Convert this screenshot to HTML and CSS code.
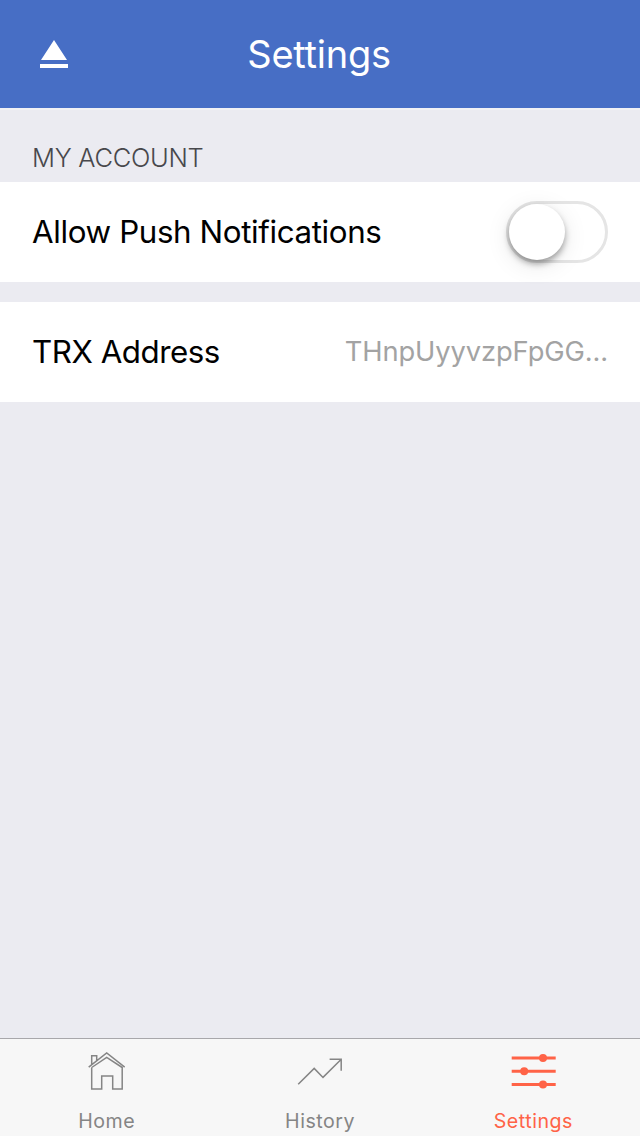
FILE: index.html
```html
<!DOCTYPE html>
<html lang="en">
<head>
<meta charset="utf-8">
<title>Settings</title>
<link rel="stylesheet" href="styles.css">
</head>
<body>
<div class="app">
  <header class="navbar">
    <button class="nav-button" aria-label="Eject">
      <svg width="28" height="28" viewBox="0 0 28 28" fill="currentColor"><path d="M14 0L27 20H1zM0 24h28v4H0z"/></svg>
    </button>
    <h1 class="title"><span>Settings</span></h1>
  </header>
  <main class="content">
    <h2 class="section-title"><span>MY ACCOUNT</span></h2>
    <div class="row">
      <span class="label label-push">Allow Push Notifications</span>
      <div class="switch" role="switch" aria-checked="false"><div class="knob"></div></div>
    </div>
    <div class="row">
      <span class="label label-address">TRX Address</span>
      <span class="value">THnpUyyvzpFpGG...</span>
    </div>
  </main>
  <nav class="tabbar">
    <a class="tab">
      <svg class="tab-icon" width="50" height="50" viewBox="0 0 50 50" fill="none" stroke="currentColor" stroke-width="1.5"><path d="M6.7 21.2L24.7 7L42.7 21.2M9.7 18.7V9.7H14.7V14.8M9.7 21.5V43H19.7V30H30.7V43H40.2V21.5L24.7 11.3L9.7 21.5"/></svg>
      <span class="tab-label">Home</span>
    </a>
    <a class="tab">
      <svg class="tab-icon" width="50" height="50" viewBox="0 0 50 50" fill="none" stroke="currentColor" stroke-width="1.5"><path d="M3.2 38.3L19.2 22.4L28 31.4L46 13.5M34.6 13.3H46.2V24.8"/></svg>
      <span class="tab-label">History</span>
    </a>
    <a class="tab active">
      <svg class="tab-icon" width="50" height="50" viewBox="0 0 50 50" fill="currentColor"><path d="M3.7 10.5h44v3H3.7zM3.7 23.8h44v3H3.7zM3.7 37h44v3H3.7z"/><circle cx="35" cy="12" r="4"/><circle cx="16.2" cy="25.3" r="4"/><circle cx="35" cy="38.5" r="4"/></svg>
      <span class="tab-label">Settings</span>
    </a>
  </nav>
</div>
</body>
</html>
```
FILE: styles.css
```css
* { box-sizing: border-box; }
body { margin: 0; font-family: Inter, "Liberation Sans", sans-serif; }
.app { display: flex; flex-direction: column; width: 640px; height: 1136px; background: #ebebf1; overflow: hidden; }
.navbar { display: grid; grid-template-columns: 108px 1fr 108px; align-items: center; height: 108px; background: #476ec5; color: #fff; }
.nav-button { display: flex; justify-content: center; padding: 0; border: 0; background: none; color: inherit; }
.title { margin: 0; padding-right: 2px; text-align: center; font-size: 38px; font-weight: 400; line-height: 46px; letter-spacing: -.25px; }
.content { flex: 1; border-top: 2px solid #f1f1f4; }
.section-title { height: 72px; margin: 0; padding: 32px 32px 0; color: #48484c; font-size: 25.5px; font-weight: 300; line-height: 32px; letter-spacing: -.28px; }
.row { display: flex; align-items: center; justify-content: space-between; height: 100px; padding: 0 32px; background: #fff; }
.row + .row { margin-top: 20px; }
.label { padding-bottom: 1px; color: #000; font-size: 31.3px; line-height: 40px; }
.label-push { letter-spacing: -.37px; }
.label-address { letter-spacing: -.46px; }
.value { color: #a3a3a3; font-size: 27.3px; line-height: 36px; letter-spacing: -.12px; }
.switch { width: 102px; height: 62px; border: 3px solid #e5e5e5; border-radius: 31px; }
.knob { width: 56px; height: 56px; border-radius: 50%; background: #fff; box-shadow: 0 4px 6px rgba(0,0,0,.34), 0 5px 24px rgba(0,0,0,.1); }
.tabbar { display: grid; grid-template-columns: repeat(3, 1fr); height: 98px; border-top: 1px solid #a8a7ab; background: #f7f7f7; }
.tab { display: flex; flex-direction: column; align-items: center; padding-top: 7px; color: #858585; }
.tab-icon { display: block; }
.tab-label { margin-top: 13px; font-size: 19.6px; line-height: 24px; letter-spacing: .5px; }
.active { color: #ff6347; }
```
